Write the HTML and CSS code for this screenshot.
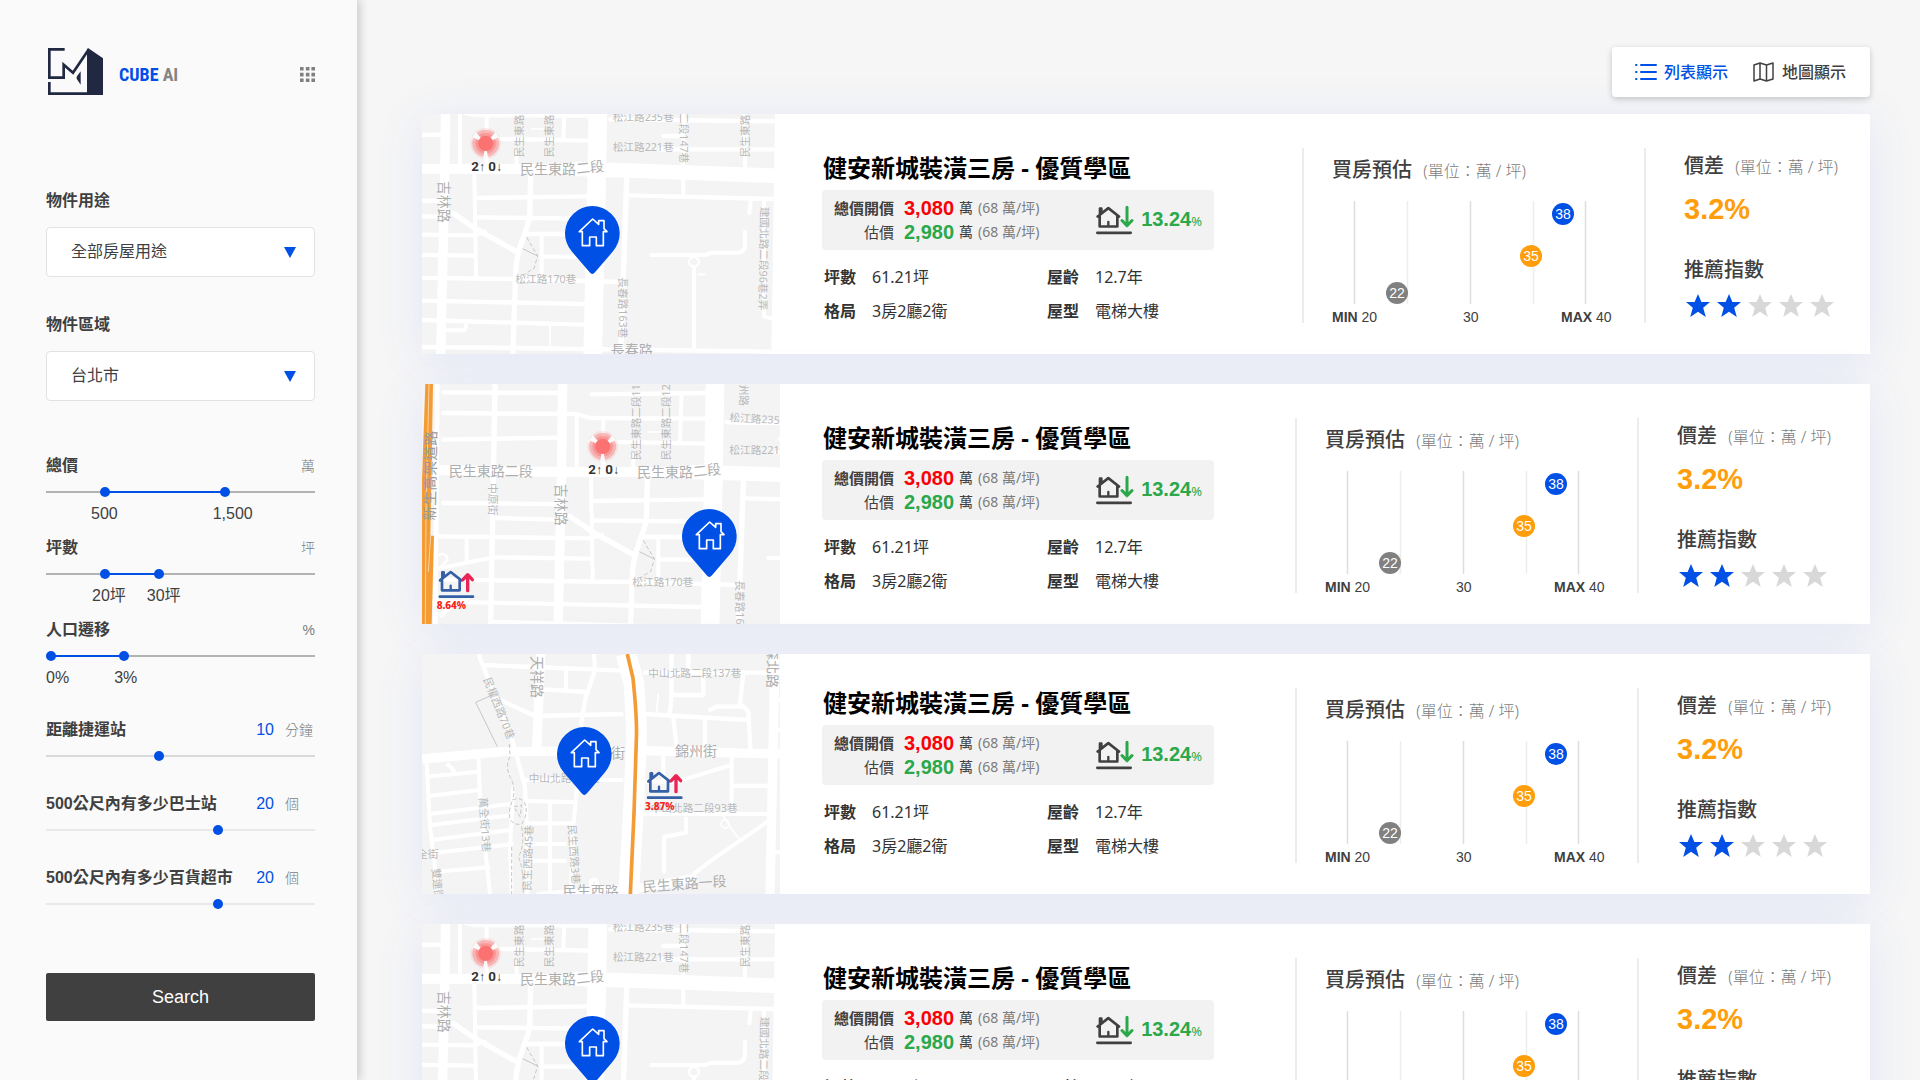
FILE: index.html
```html
<!DOCTYPE html>
<html lang="zh-Hant">
<head>
<meta charset="utf-8">
<meta name="viewport" content="width=device-width, initial-scale=1">
<title>CUBE AI</title>
<link rel="stylesheet" href="styles.css">
</head>
<body>
<svg class="sprite" aria-hidden="true">
  <symbol id="district" viewBox="36 42 1074 720" overflow="visible">
    <g fill="none" stroke="#fff" stroke-linecap="round" stroke-linejoin="round">
      <path stroke-width="28" d="M108-60L104 240L92 770"/>
      <path stroke-width="30" d="M-320 200L36 206L500 208"/>
      <path stroke-width="44" d="M500 207L700 213L1120 228"/>
      <path stroke-width="56" d="M565-60L560 240L548 770"/>
      <path stroke-width="16" d="M362 225L359 350C350 400 325 430 318 500L308 770M650 235L640 530L632 760M-95-60L-108 670M130 340L195 385L320 455"/>
      <path stroke-width="12" d="M193 225L198 530M150 33V190M230 45V190M320 150V190M465-30L460 115M820-60V200M1005-60V200M820 240V285M1022 305L1018 340"/>
      <path stroke-width="13" d="M-250-32L90-30M195-26L535-30M-250 30L150 33L190 45L535 47M-250 110L90 104M190 115L535 122M600 58L1090 64M750 148H1090M760 108H820M195 294L535 289M655 286L1090 297M-250 300L85 303M-100 345L85 350M195 352L535 356M-270 400L190 406M350 402H530M-95 463L190 467M395 470H530M-250 530L310 537L640 546M-300 595L36 602L520 612M-100 656L36 660L520 674M-250 738L300 744L1090 755"/>
      <path stroke-width="12" d="M195 405L225 395M395 405V530M110 691H160Q168 690 168 675M-180 410V480M725 465H885L905 458H985Q1005 455 1005 435V395M852 500V745M1062 300V650L1090 656M-280 500L-160 475L-95 463"/>
      <path stroke-width="5" d="M420 675V735M865 523H885M365 87H400"/>
      <circle cx="852" cy="486" r="15" stroke-width="7"/>
    </g>
    <g fill="none" stroke="#c6c6c6" stroke-width="3">
      <path stroke-dasharray="12 7" d="M350 412L383 468L372 505L340 525"/>
      <path d="M338 446L383 468"/>
    </g>
  </symbol>
  <symbol id="pin" viewBox="0 0 168 208">
    <path fill="#0050e6" d="M84 206Q80 206 76 201L22 138A82 82 0 1 1 146 138L92 201Q88 206 84 206Z"/>
    <path fill="none" stroke="#fff" stroke-width="5" stroke-linejoin="round" d="M45 79L85 41L103 57V46H119V70L128 79H117V121H96V95H76V121H54V79Z"/>
  </symbol>
  <symbol id="signal" viewBox="0 0 96 96">
    <g fill="#fb7272">
      <circle cx="48" cy="48" r="46" opacity=".15"/>
      <circle cx="48" cy="48" r="40" opacity=".4"/>
      <circle cx="48" cy="48" r="31" opacity=".45"/>
      <path fill="#fafafa" d="M48 48L8 30L18 14ZM48 48L88 30L78 14ZM48 48L40 96H56Z"/>
      <circle cx="48" cy="48" r="23"/>
    </g>
  </symbol>
  <symbol id="house" viewBox="883 284 114 92">
    <g fill="none" stroke="currentColor" stroke-width="8" stroke-linecap="round" stroke-linejoin="round">
      <path d="M888 318L920 293L952 318M894 316V348H947V316M895 312V294H899V303"/>
      <path stroke-width="7" d="M920 334V345"/>
      <path stroke-width="8" d="M887 367H987"/>
    </g>
  </symbol>
  <symbol id="arrow" viewBox="883 284 114 92">
    <path fill="none" stroke="currentColor" stroke-width="9" stroke-linecap="round" stroke-linejoin="round" d="M976 290V345M961 330L976 346L991 330"/>
  </symbol>
  <symbol id="arrow-up" viewBox="883 284 114 92">
    <path fill="none" stroke="currentColor" stroke-width="10" stroke-linecap="round" stroke-linejoin="round" d="M971 349V302M957 316L971 301L985 316"/>
  </symbol>
  <symbol id="star" viewBox="0 0 24 24">
    <path fill="currentColor" d="M12 0L15.4 8H24L17.2 13.8L19.8 23L12 17.8L4.200 23L6.800 13.800L0 8H8.600Z"/>
  </symbol>
</svg>

<div class="app">
  <aside class="sidebar">
    <header class="brand">
      <svg class="brand-mark" viewBox="0 0 165 141" role="img" aria-label="CUBE AI">
        <g fill="none" stroke="#212842" stroke-width="8">
          <path d="M50 4H4V89H47V50L75 74L121 6"/>
          <path d="M4 102V137H120"/>
        </g>
        <path fill="#212842" d="M117 4L120 0L165 31V141H117ZM98 70V110L86 92V86Z"/>
      </svg>
      <span class="brand-name">CUBE <span class="brand-ai">AI</span></span>
      <button class="apps" type="button" aria-label="選單">
        <svg viewBox="0 0 46 46" fill="#808080"><path d="M0 0h11v11H0zM18 0h11v11H18zM35 0h11v11H35zM0 18h11v11H0zM18 18h11v11H18zM35 18h11v11H35zM0 35h11v11H0zM18 35h11v11H18zM35 35h11v11H35z"/></svg>
      </button>
    </header>

    <form class="filters">
      <div class="selects">
        <div class="field">
          <label class="label" for="usage">物件用途</label>
          <div class="select"><select id="usage"><option>全部房屋用途</option></select></div>
        </div>
        <div class="field">
          <label class="label" for="area">物件區域</label>
          <div class="select"><select id="area"><option>台北市</option></select></div>
        </div>
      </div>

      <div class="ranges">
        <div class="range">
          <div class="range-head"><label class="label" for="price-min">總價</label><span class="unit">萬</span></div>
          <div class="slider dual" style="--from:21%;--to:67%">
            <input type="range" id="price-min" min="50" max="2210" value="500">
            <input type="range" aria-label="總價上限" min="50" max="2210" value="1500">
          </div>
          <div class="values values-price"><output>500</output><output>1,500</output></div>
        </div>
        <div class="range">
          <div class="range-head"><label class="label" for="size-min">坪數</label><span class="unit">坪</span></div>
          <div class="slider dual" style="--from:21%;--to:42%">
            <input type="range" id="size-min" min="10" max="58" value="20">
            <input type="range" aria-label="坪數上限" min="10" max="58" value="30">
          </div>
          <div class="values values-size"><output>20坪</output><output>30坪</output></div>
        </div>
        <div class="range">
          <div class="range-head"><label class="label" for="move-min">人口遷移</label><span class="unit">%</span></div>
          <div class="slider dual" style="--from:1%;--to:29%">
            <input type="range" id="move-min" min="0" max="10.6" step="0.1" value="0">
            <input type="range" aria-label="人口遷移上限" min="0" max="10.6" step="0.1" value="3">
          </div>
          <div class="values values-move"><output>0%</output><output>3%</output></div>
        </div>
      </div>

      <div class="levels">
        <div class="range">
          <div class="range-head"><label class="label" for="mrt">距離捷運站</label><output class="level">10</output><span class="unit unit-wide">分鐘</span></div>
          <div class="slider medium"><input type="range" id="mrt" min="0" max="24" value="10"></div>
        </div>
        <div class="range">
          <div class="range-head"><label class="label" for="bus">500公尺內有多少巴士站</label><output class="level">20</output><span class="unit unit-wide">個</span></div>
          <div class="slider light"><input type="range" id="bus" min="0" max="31" value="20"></div>
        </div>
        <div class="range">
          <div class="range-head"><label class="label" for="shop">500公尺內有多少百貨超市</label><output class="level">20</output><span class="unit unit-wide">個</span></div>
          <div class="slider light"><input type="range" id="shop" min="0" max="31" value="20"></div>
        </div>
      </div>

      <button class="search" type="button">Search</button>
    </form>
  </aside>

  <main class="main">
    <nav class="tabs">
      <button class="tab active" type="button">
        <svg width="22" height="18" viewBox="0 0 22 18" fill="none" stroke="currentColor" stroke-width="2" stroke-linecap="round"><path d="M6 2H21M6 9H21M6 16H21M1 2H1.500M1 9H1.500M1 16H1.500"/></svg>
        列表顯示
      </button>
      <button class="tab" type="button">
        <svg width="21" height="20" viewBox="0 0 21 20" fill="none" stroke="currentColor" stroke-width="1.500" stroke-linejoin="round"><path d="M1 3L7 1L13.500 3L20 1V17L13.500 19L7 17L1 19ZM7 1V17M13.500 3V19"/></svg>
        地圖顯示
      </button>
    </nav>

    <section class="cards">
      <article class="card card-wide">
        <svg class="map" viewBox="36 42 1074 720">
          <path fill="#f4f4f4" d="M36 42H1095L1084 762H36Z"/>
          <use href="#district" x="36" y="42" width="1074" height="720"/>
          <g class="road-names">
            <text x="330" y="223">民生東路</text><text x="500" y="221" transform="rotate(-6 500 221)">二段</text>
            <text transform="translate(86 242) rotate(90)">吉林路</text>
            <g class="minor">
              <text x="608" y="63">松江路235巷</text><text x="608" y="154">松江路221巷</text><text x="316" y="550">松江路170巷</text>
              <text transform="translate(338 172) rotate(-90)">民生東路二段115巷</text>
              <text transform="translate(428 172) rotate(-90)">民生東路二段125巷</text>
              <text transform="translate(1018 172) rotate(-90)">民生東路二段</text>
              <text transform="translate(810 -25) rotate(90)">松江二段147巷</text>
              <text transform="translate(1052 320) rotate(91)">建國北路二段96巷2弄</text>
              <text transform="translate(628 532) rotate(90)">長春路163巷</text>
            </g>
            <text x="602" y="764">長春路</text>
          </g>
          <use href="#signal" x="179" y="82" width="96" height="96"/>
          <text class="count" x="184" y="213">2<tspan class="thin">↑</tspan> 0<tspan class="thin">↓</tspan></text>
          <use href="#pin" x="463" y="316" width="168" height="208"/>
        </svg>
        <div class="info">
          <h2 class="title">健安新城裝潢三房 - 優質學區</h2>
          <div class="prices">
            <dl class="quotes">
              <dt class="ask">總價開價</dt><dd><b class="red">3,080</b> 萬 <span class="per">(68 萬/坪)</span></dd>
              <dt>估價</dt><dd><b class="green">2,980</b> 萬 <span class="per">(68 萬/坪)</span></dd>
            </dl>
            <div class="trend"><svg class="trend-icon" viewBox="0 0 114 92"><use href="#house" width="114" height="92"/><use class="green" href="#arrow" width="114" height="92"/></svg><b class="green">13.24<small>%</small></b></div>
          </div>
          <dl class="facts"><dt>坪數</dt><dd>61.21坪</dd><dt>屋齡</dt><dd>12.7年</dd><dt>格局</dt><dd>3房2廳2衛</dd><dt>屋型</dt><dd>電梯大樓</dd></dl>
        </div>
        <div class="estimate">
          <h3 class="caption">買房預估 <span>(單位：萬 / 坪)</span></h3>
          <svg class="chart" viewBox="0 0 284 122">
            <path stroke="#ddd" stroke-width="1.500" d="M22.500 0V103M138.500 0V103M253.500 0V103"/><path stroke="#ededed" stroke-width="1.500" d="M75.500 0V103M201.500 0V103"/>
            <circle cx="65" cy="92" r="11" fill="#808080"/><circle cx="199" cy="55" r="11" fill="#ff9d0a"/><circle cx="231" cy="13" r="11" fill="#0050e6"/>
            <g class="dots"><text x="65" y="97">22</text><text x="199" y="60">35</text><text x="231" y="18">38</text></g>
            <g class="axis"><text x="0" y="121"><tspan class="strong">MIN</tspan> 20</text><text x="131" y="121">30</text><text x="229" y="121"><tspan class="strong">MAX</tspan> 40</text></g>
          </svg>
        </div>
        <div class="score">
          <h3 class="caption">價差 <span>(單位：萬 / 坪)</span></h3>
          <b class="spread">3.2%</b>
          <h3 class="caption">推薦指數</h3>
          <svg class="stars" viewBox="0 0 148 24" role="img" aria-label="2 / 5"><g class="on"><use href="#star" width="24" height="24"/><use href="#star" x="31" width="24" height="24"/></g><g class="off"><use href="#star" x="62" width="24" height="24"/><use href="#star" x="93" width="24" height="24"/><use href="#star" x="124" width="24" height="24"/></g></svg>
        </div>
      </article>

      <article class="card">
        <svg class="map" viewBox="36 42 1074 720">
          <path fill="#f4f4f4" d="M36 42H1110V762H36Z"/>
          <use href="#district" x="386" y="141" width="1074" height="720"/>
          <g fill="none" stroke="#fff" stroke-width="14"><path d="M82 42L76 762M90 740Q120 700 180 690"/><path stroke-width="8" d="M76 560Q110 540 112 570L85 600"/></g>
          <path fill="#f49b34" d="M46 42H69L61 497H72L65 762H36V330Z"/>
          <path fill="none" stroke="#fbd3a0" stroke-width="3" d="M57 42L48 420L46 762M62 497L55 605"/>
          <g class="road-names">
            <text x="116" y="317">民生東路二段</text><text x="681" y="322">民生東路</text><text x="851" y="320" transform="rotate(-6 851 320)">二段</text>
            <text class="dark" transform="translate(75 452) rotate(-89)">新生高架道路</text>
            <text transform="translate(437 341) rotate(90)">吉林路</text>
            <g class="minor">
              <text transform="translate(238 340) rotate(90)">中原街</text>
              <text x="958" y="154" transform="rotate(3 958 154)">松江路235巷</text><text x="958" y="252">松江路221巷</text><text x="667" y="649">松江路170巷</text>
              <text transform="translate(689 271) rotate(-90)">民生東路二段115巷</text>
              <text transform="translate(779 271) rotate(-90)">民生東路二段125巷</text>
              <text transform="translate(990 12) rotate(90)">錦州路</text>
              <text transform="translate(978 631) rotate(90)">長春路163巷</text>
            </g>
          </g>
          <use href="#signal" x="530" y="181" width="96" height="96"/>
          <text class="count" x="535" y="312">2<tspan class="thin">↑</tspan> 0<tspan class="thin">↓</tspan></text>
          <use href="#pin" x="814" y="415" width="168" height="208"/>
          <use class="rise-house" href="#house" x="85" y="597" width="114" height="92"/><use class="rise-arrow" href="#arrow-up" x="85" y="597" width="114" height="92"/>
          <text class="rise" x="80" y="717">8.64%</text>
        </svg>
        <div class="info">
          <h2 class="title">健安新城裝潢三房 - 優質學區</h2>
          <div class="prices">
            <dl class="quotes">
              <dt class="ask">總價開價</dt><dd><b class="red">3,080</b> 萬 <span class="per">(68 萬/坪)</span></dd>
              <dt>估價</dt><dd><b class="green">2,980</b> 萬 <span class="per">(68 萬/坪)</span></dd>
            </dl>
            <div class="trend"><svg class="trend-icon" viewBox="0 0 114 92"><use href="#house" width="114" height="92"/><use class="green" href="#arrow" width="114" height="92"/></svg><b class="green">13.24<small>%</small></b></div>
          </div>
          <dl class="facts"><dt>坪數</dt><dd>61.21坪</dd><dt>屋齡</dt><dd>12.7年</dd><dt>格局</dt><dd>3房2廳2衛</dd><dt>屋型</dt><dd>電梯大樓</dd></dl>
        </div>
        <div class="estimate">
          <h3 class="caption">買房預估 <span>(單位：萬 / 坪)</span></h3>
          <svg class="chart" viewBox="0 0 284 122">
            <path stroke="#ddd" stroke-width="1.500" d="M22.500 0V103M138.500 0V103M253.500 0V103"/><path stroke="#ededed" stroke-width="1.500" d="M75.500 0V103M201.500 0V103"/>
            <circle cx="65" cy="92" r="11" fill="#808080"/><circle cx="199" cy="55" r="11" fill="#ff9d0a"/><circle cx="231" cy="13" r="11" fill="#0050e6"/>
            <g class="dots"><text x="65" y="97">22</text><text x="199" y="60">35</text><text x="231" y="18">38</text></g>
            <g class="axis"><text x="0" y="121"><tspan class="strong">MIN</tspan> 20</text><text x="131" y="121">30</text><text x="229" y="121"><tspan class="strong">MAX</tspan> 40</text></g>
          </svg>
        </div>
        <div class="score">
          <h3 class="caption">價差 <span>(單位：萬 / 坪)</span></h3>
          <b class="spread">3.2%</b>
          <h3 class="caption">推薦指數</h3>
          <svg class="stars" viewBox="0 0 148 24" role="img" aria-label="2 / 5"><g class="on"><use href="#star" width="24" height="24"/><use href="#star" x="31" width="24" height="24"/></g><g class="off"><use href="#star" x="62" width="24" height="24"/><use href="#star" x="93" width="24" height="24"/><use href="#star" x="124" width="24" height="24"/></g></svg>
        </div>
      </article>

      <article class="card card-raised">
        <svg class="map" viewBox="36 42 1074 720">
          <path fill="#f4f4f4" d="M36 42H1110V762H36Z"/>
          <g fill="none" stroke="#fff" stroke-linejoin="round">
            <path stroke-width="62" d="M648 42L672 130L680 280L672 480L656 762"/>
            <path stroke-width="28" d="M36 357L280 335L640 332M700 332L1110 342M392 42L380 330M1095 42L1080 762M380 770L700 742L860 715"/>
            <path stroke-width="13" d="M205 42L240 130L310 310L345 440L350 560L352 762M220 75L640 92M260 175L375 228L640 222M552 42L555 90L525 180L512 260M400 148L530 156M700 98H1110M700 222L1015 240M1000 100L990 190L1015 215L1022 340M880 100V165H790M785 42V165L778 235M835 42V100M885 235V330M790 235L800 320M895 212L920 200H995"/>
            <path stroke-width="12" d="M50 370L60 560L85 762M205 350L212 500L240 762M310 440L300 620L305 762M50 410L205 395M60 467L205 450M60 522L300 492M65 555L305 525M65 600L300 570M75 638L310 612M75 695L240 682M110 370L135 395M345 420H640M350 483L490 486M350 550H490M420 480V762M502 430L490 560L482 762M350 612H470M350 662H470M690 425H800L965 375M760 345V430M965 350V437H1080M965 437V520M700 522H1080M828 530V578L762 590V700M850 702L920 650L1080 540M1080 180H1110M1080 270H1110M1080 637H1110M468 80V148"/>
            <path stroke-width="5" d="M935 520Q965 570 990 600M745 160L740 220"/><circle cx="945" cy="552" r="12" stroke-width="5"/><circle cx="552" cy="728" r="10" stroke-width="12"/>
          </g>
          <g fill="none" stroke="#c6c6c6" stroke-width="3"><path d="M240 168L197 187L262 320"/><path stroke-dasharray="12 7" d="M298 312L300 350Q285 380 300 410Q318 440 308 480M308 480C350 460 360 520 335 552C295 560 290 520 308 480M312 500L335 495L330 530ZM335 560Q345 620 325 650Q342 690 340 762M305 620V762"/></g>
          <path fill="none" stroke="#f49b34" stroke-width="11" d="M652 42L669 115Q682 240 679 300L672 520L661 762"/>
          <g class="road-names">
            <text transform="translate(366 48) rotate(90)">天祥路</text>
            <text transform="translate(1074 -24) rotate(91)">林森北路</text>
            <text x="519" y="355">錦州街</text><text x="795" y="349">錦州街</text>
            <text x="458" y="768">民生西路</text><text x="699" y="756" transform="rotate(-4 699 756)">民生東路一段</text>
            <g class="minor">
              <text x="715" y="110">中山北路二段137巷</text><text x="356" y="427">中山北路106巷</text><text x="722" y="516">中山北路二段93巷</text>
              <text transform="translate(220 118) rotate(68)">民權西路70巷</text>
              <text transform="translate(207 473) rotate(86)">萬全街13巷</text>
              <text transform="translate(362 752) rotate(-88)">民生西路45巷</text>
              <text transform="translate(474 555) rotate(86)">民生西路3巷</text>
              <text transform="translate(66 686) rotate(84)">雙連街</text>
              <text x="22" y="655">全街</text>
            </g>
          </g>
          <use href="#pin" x="439" y="259" width="168" height="208"/>
          <use class="rise-house" href="#house" x="710" y="390" width="114" height="92"/><use class="rise-arrow" href="#arrow-up" x="710" y="390" width="114" height="92"/>
          <text class="rise" x="705" y="510">3.87%</text>
        </svg>
        <div class="info">
          <h2 class="title">健安新城裝潢三房 - 優質學區</h2>
          <div class="prices">
            <dl class="quotes">
              <dt class="ask">總價開價</dt><dd><b class="red">3,080</b> 萬 <span class="per">(68 萬/坪)</span></dd>
              <dt>估價</dt><dd><b class="green">2,980</b> 萬 <span class="per">(68 萬/坪)</span></dd>
            </dl>
            <div class="trend"><svg class="trend-icon" viewBox="0 0 114 92"><use href="#house" width="114" height="92"/><use class="green" href="#arrow" width="114" height="92"/></svg><b class="green">13.24<small>%</small></b></div>
          </div>
          <dl class="facts"><dt>坪數</dt><dd>61.21坪</dd><dt>屋齡</dt><dd>12.7年</dd><dt>格局</dt><dd>3房2廳2衛</dd><dt>屋型</dt><dd>電梯大樓</dd></dl>
        </div>
        <div class="estimate">
          <h3 class="caption">買房預估 <span>(單位：萬 / 坪)</span></h3>
          <svg class="chart" viewBox="0 0 284 122">
            <path stroke="#ddd" stroke-width="1.500" d="M22.500 0V103M138.500 0V103M253.500 0V103"/><path stroke="#ededed" stroke-width="1.500" d="M75.500 0V103M201.500 0V103"/>
            <circle cx="65" cy="92" r="11" fill="#808080"/><circle cx="199" cy="55" r="11" fill="#ff9d0a"/><circle cx="231" cy="13" r="11" fill="#0050e6"/>
            <g class="dots"><text x="65" y="97">22</text><text x="199" y="60">35</text><text x="231" y="18">38</text></g>
            <g class="axis"><text x="0" y="121"><tspan class="strong">MIN</tspan> 20</text><text x="131" y="121">30</text><text x="229" y="121"><tspan class="strong">MAX</tspan> 40</text></g>
          </svg>
        </div>
        <div class="score">
          <h3 class="caption">價差 <span>(單位：萬 / 坪)</span></h3>
          <b class="spread">3.2%</b>
          <h3 class="caption">推薦指數</h3>
          <svg class="stars" viewBox="0 0 148 24" role="img" aria-label="2 / 5"><g class="on"><use href="#star" width="24" height="24"/><use href="#star" x="31" width="24" height="24"/></g><g class="off"><use href="#star" x="62" width="24" height="24"/><use href="#star" x="93" width="24" height="24"/><use href="#star" x="124" width="24" height="24"/></g></svg>
        </div>
      </article>

      <article class="card">
        <svg class="map" viewBox="36 42 1074 720">
          <path fill="#f4f4f4" d="M36 42H1095L1084 762H36Z"/>
          <use href="#district" x="36" y="42" width="1074" height="720"/>
          <g class="road-names">
            <text x="330" y="223">民生東路</text><text x="500" y="221" transform="rotate(-6 500 221)">二段</text>
            <text transform="translate(86 242) rotate(90)">吉林路</text>
            <g class="minor">
              <text x="608" y="63">松江路235巷</text><text x="608" y="154">松江路221巷</text><text x="316" y="550">松江路170巷</text>
              <text transform="translate(338 172) rotate(-90)">民生東路二段115巷</text>
              <text transform="translate(428 172) rotate(-90)">民生東路二段125巷</text>
              <text transform="translate(1018 172) rotate(-90)">民生東路二段</text>
              <text transform="translate(810 -25) rotate(90)">松江二段147巷</text>
              <text transform="translate(1052 320) rotate(91)">建國北路二段96巷2弄</text>
            </g>
          </g>
          <use href="#signal" x="179" y="82" width="96" height="96"/>
          <text class="count" x="184" y="213">2<tspan class="thin">↑</tspan> 0<tspan class="thin">↓</tspan></text>
          <use href="#pin" x="463" y="316" width="168" height="208"/>
        </svg>
        <div class="info">
          <h2 class="title">健安新城裝潢三房 - 優質學區</h2>
          <div class="prices">
            <dl class="quotes">
              <dt class="ask">總價開價</dt><dd><b class="red">3,080</b> 萬 <span class="per">(68 萬/坪)</span></dd>
              <dt>估價</dt><dd><b class="green">2,980</b> 萬 <span class="per">(68 萬/坪)</span></dd>
            </dl>
            <div class="trend"><svg class="trend-icon" viewBox="0 0 114 92"><use href="#house" width="114" height="92"/><use class="green" href="#arrow" width="114" height="92"/></svg><b class="green">13.24<small>%</small></b></div>
          </div>
          <dl class="facts"><dt>坪數</dt><dd>61.21坪</dd><dt>屋齡</dt><dd>12.7年</dd><dt>格局</dt><dd>3房2廳2衛</dd><dt>屋型</dt><dd>電梯大樓</dd></dl>
        </div>
        <div class="estimate">
          <h3 class="caption">買房預估 <span>(單位：萬 / 坪)</span></h3>
          <svg class="chart" viewBox="0 0 284 122">
            <path stroke="#ddd" stroke-width="1.500" d="M22.500 0V103M138.500 0V103M253.500 0V103"/><path stroke="#ededed" stroke-width="1.500" d="M75.500 0V103M201.500 0V103"/>
            <circle cx="65" cy="92" r="11" fill="#808080"/><circle cx="199" cy="55" r="11" fill="#ff9d0a"/><circle cx="231" cy="13" r="11" fill="#0050e6"/>
            <g class="dots"><text x="65" y="97">22</text><text x="199" y="60">35</text><text x="231" y="18">38</text></g>
            <g class="axis"><text x="0" y="121"><tspan class="strong">MIN</tspan> 20</text><text x="131" y="121">30</text><text x="229" y="121"><tspan class="strong">MAX</tspan> 40</text></g>
          </svg>
        </div>
        <div class="score">
          <h3 class="caption">價差 <span>(單位：萬 / 坪)</span></h3>
          <b class="spread">3.2%</b>
          <h3 class="caption">推薦指數</h3>
          <svg class="stars" viewBox="0 0 148 24" role="img" aria-label="2 / 5"><g class="on"><use href="#star" width="24" height="24"/><use href="#star" x="31" width="24" height="24"/></g><g class="off"><use href="#star" x="62" width="24" height="24"/><use href="#star" x="93" width="24" height="24"/><use href="#star" x="124" width="24" height="24"/></g></svg>
        </div>
      </article>
    </section>
  </main>
</div>
</body>
</html>
```
FILE: styles.css
```css
:root {
  --blue: #0050e6;
  --green: #2aa84a;
  --ink: #404040;
  --muted: #7c7c7c;
  --sans: "Noto Sans", "Noto Sans CJK TC", sans-serif;
  --helv: "Liberation Sans", "Noto Sans CJK TC", sans-serif;
}

* { box-sizing: border-box; }

body {
  margin: 0;
  background: #f6f6f6;
  color: var(--ink);
  font: 16px/24px var(--sans);
}

button, select, output { font: inherit; color: inherit; }
button { border: 0; padding: 0; background: none; cursor: pointer; }
h2, h3, dl, dd { margin: 0; }
svg { display: block; }

.sprite { position: absolute; width: 0; height: 0; }

.app { display: flex; height: 100vh; }

/* Sidebar */
.sidebar {
  flex: 0 0 357px;
  padding: 48px 42px 0 46px;
  background: #fafafa;
  box-shadow: 3px 0 9px rgba(0, 0, 0, .18);
  font-family: var(--helv);
  z-index: 1;
  overflow-y: auto;
  scrollbar-width: none;
}

.brand { display: flex; align-items: center; gap: 16px; padding-left: 2px; }
.brand-mark { width: 55px; height: 47px; }
.brand-name {
  flex: 1;
  color: var(--blue);
  font: bold 18px/28px "Liberation Sans Narrow", "Roboto Condensed", "Open Sans Condensed", "Liberation Sans", sans-serif;
  padding-top: 6px;
}
.brand-ai { color: #858585; }
.apps svg { width: 15px; height: 15px; }
.apps { padding-top: 6px; }

.filters { display: flex; flex-direction: column; }
.selects { display: flex; flex-direction: column; gap: 36px; margin-top: 94px; }
.field { display: flex; flex-direction: column; gap: 14px; }
.label { font-weight: 600; }

.select { display: grid; align-items: center; }
.select select {
  grid-area: 1 / 1;
  appearance: none;
  width: 100%;
  height: 50px;
  padding: 0 24px;
  border: 1px solid #e2e2e2;
  border-radius: 4px;
  background: #fff;
}
.select::after {
  content: "";
  grid-area: 1 / 1;
  justify-self: end;
  margin-right: 19px;
  border: 6px solid transparent;
  border-top: 11px solid var(--blue);
  border-bottom: 0;
  pointer-events: none;
}

.ranges { display: flex; flex-direction: column; gap: 10px; margin-top: 53px; }
.levels { display: flex; flex-direction: column; gap: 31px; margin-top: 28px; }
.range-head { display: flex; align-items: center; margin-bottom: 9px; }
.range-head .label { flex: 1; white-space: nowrap; }
.unit { color: var(--muted); font-size: 14px; font-weight: 300; }
.unit-wide { width: 30px; margin-left: 11px; }
.level { color: var(--blue); }

.slider {
  --line: #b3b3b3;
  display: grid;
  height: 10px;
  background: linear-gradient(var(--line), var(--line)) center / 100% 2px no-repeat;
}
.slider.dual {
  background:
    linear-gradient(90deg, var(--line) var(--from), var(--blue) var(--from) var(--to), var(--line) var(--to))
    center / 100% 2px no-repeat;
}
.slider.medium { --line: #d9d9d9; }
.slider.light { --line: #e9e9e9; }
.slider input {
  grid-area: 1 / 1;
  appearance: none;
  width: 100%;
  height: 10px;
  margin: 0;
  background: none;
  pointer-events: none;
}
.slider input::-webkit-slider-thumb {
  appearance: none;
  width: 10px;
  height: 10px;
  border-radius: 50%;
  background: var(--blue);
  pointer-events: auto;
}
.values { display: flex; margin-top: 5px; }
.values-price { padding-left: 45px; gap: 95px; }
.values-size { padding-left: 46px; gap: 21px; }
.values-move { gap: 45px; }

.search {
  height: 48px;
  margin-top: 64px;
  border-radius: 2px;
  background: #404040;
  color: #fff;
  font-size: 18px;
}

/* Results */
.main {
  flex: 1;
  min-width: 0;
  padding: 47px 50px 30px 65px;
  overflow-y: auto;
  scrollbar-width: none;
}

.tabs {
  display: flex;
  gap: 25px;
  width: max-content;
  height: 50px;
  margin: 0 0 17px auto;
  padding: 0 24px 0 23px;
  border-radius: 4px;
  background: #fff;
  box-shadow: 0 2px 6px rgba(0, 0, 0, .2);
  position: relative;
  z-index: 1;
}
.tab { display: flex; align-items: center; gap: 8px; font-weight: 500; }
.tab.active { color: var(--blue); gap: 7px; }

.cards { display: flex; flex-direction: column; gap: 30px; }
.card {
  display: flex;
  min-height: 240px;
  background: #fff;
  box-shadow: 0 6px 45px rgba(60, 100, 255, .1);
}
.map { flex: none; width: 358px; height: 240px; overflow: hidden; }

.road-names { fill: #aeaeae; font-size: 42px; }
.road-names .minor { fill: #b9b9b9; font-size: 32px; }
.road-names .dark { fill: #999; font-size: 45px; }
.count { fill: #333; font: 700 40px Roboto, sans-serif; }
.count .thin { font: 700 36px "Liberation Sans", sans-serif; }
.rise { fill: #fa2314; font-size: 30px; font-weight: 800; }
.rise-house { color: #3560a8; }
.rise-arrow { color: #ea2553; }

.info { flex: 1; min-width: 0; padding: 38px 0 0 42px; }
.card-raised .info { padding-top: 33px; }
.title { padding-left: 1px; color: #000; font-size: 24px; line-height: 32px; font-weight: 700; white-space: nowrap; }

.prices {
  display: flex;
  align-items: center;
  justify-content: space-between;
  width: 392px;
  height: 60px;
  margin-top: 6px;
  padding: 0 12px;
  border-radius: 4px;
  background: #f2f2f2;
}
.quotes { display: grid; grid-template-columns: 60px auto; column-gap: 10px; font-size: 15px; line-height: 24px; }
.quotes dt { text-align: right; }
.quotes .ask { font-weight: 600; }
.quotes dd { display: flex; gap: 5px; font-size: 14px; white-space: nowrap; }
.quotes b, .trend b { font: bold 20px/24px var(--helv); }
.per { color: var(--muted); }
.red { color: #fb0007; }
.green { color: var(--green); }
.trend { display: flex; align-items: center; gap: 7px; }
.trend-icon { width: 38px; height: 31px; }
.trend small { font: 13px/24px var(--sans); }

.facts {
  display: grid;
  grid-template-columns: 48px 175px 48px auto;
  gap: 10px 0;
  margin-top: 15px;
  padding-left: 2px;
  color: #333;
}
.facts dt { font-weight: 600; }

.estimate, .score { margin: 34px 0 31px; border-left: 2px solid #ececec; }
.estimate { flex: 0 0 342px; padding: 8px 0 0 28px; }
.score { flex: 0 0 233px; padding: 4px 0 0 38px; }
.card-wide .score { flex-basis: 226px; }
.caption { color: var(--ink); font-size: 20px; line-height: 28px; font-weight: 500; white-space: nowrap; }
.caption span { margin-left: 6px; color: var(--muted); font-size: 16px; font-weight: 300; }

.chart { width: 284px; height: 122px; margin-top: 16px; }
.dots { fill: #fff; font: 14px var(--helv); text-anchor: middle; }
.axis { fill: var(--ink); font: 14px var(--helv); }
.axis .strong { font-weight: 700; }

.spread { display: block; margin: 10px 0 29px; color: #ff9d0a; font: bold 29px/36px var(--helv); }
.stars { width: 148px; height: 24px; margin: 10px 0 0 2px; }
.on { color: var(--blue); }
.off { color: #d8d8d8; }
```
